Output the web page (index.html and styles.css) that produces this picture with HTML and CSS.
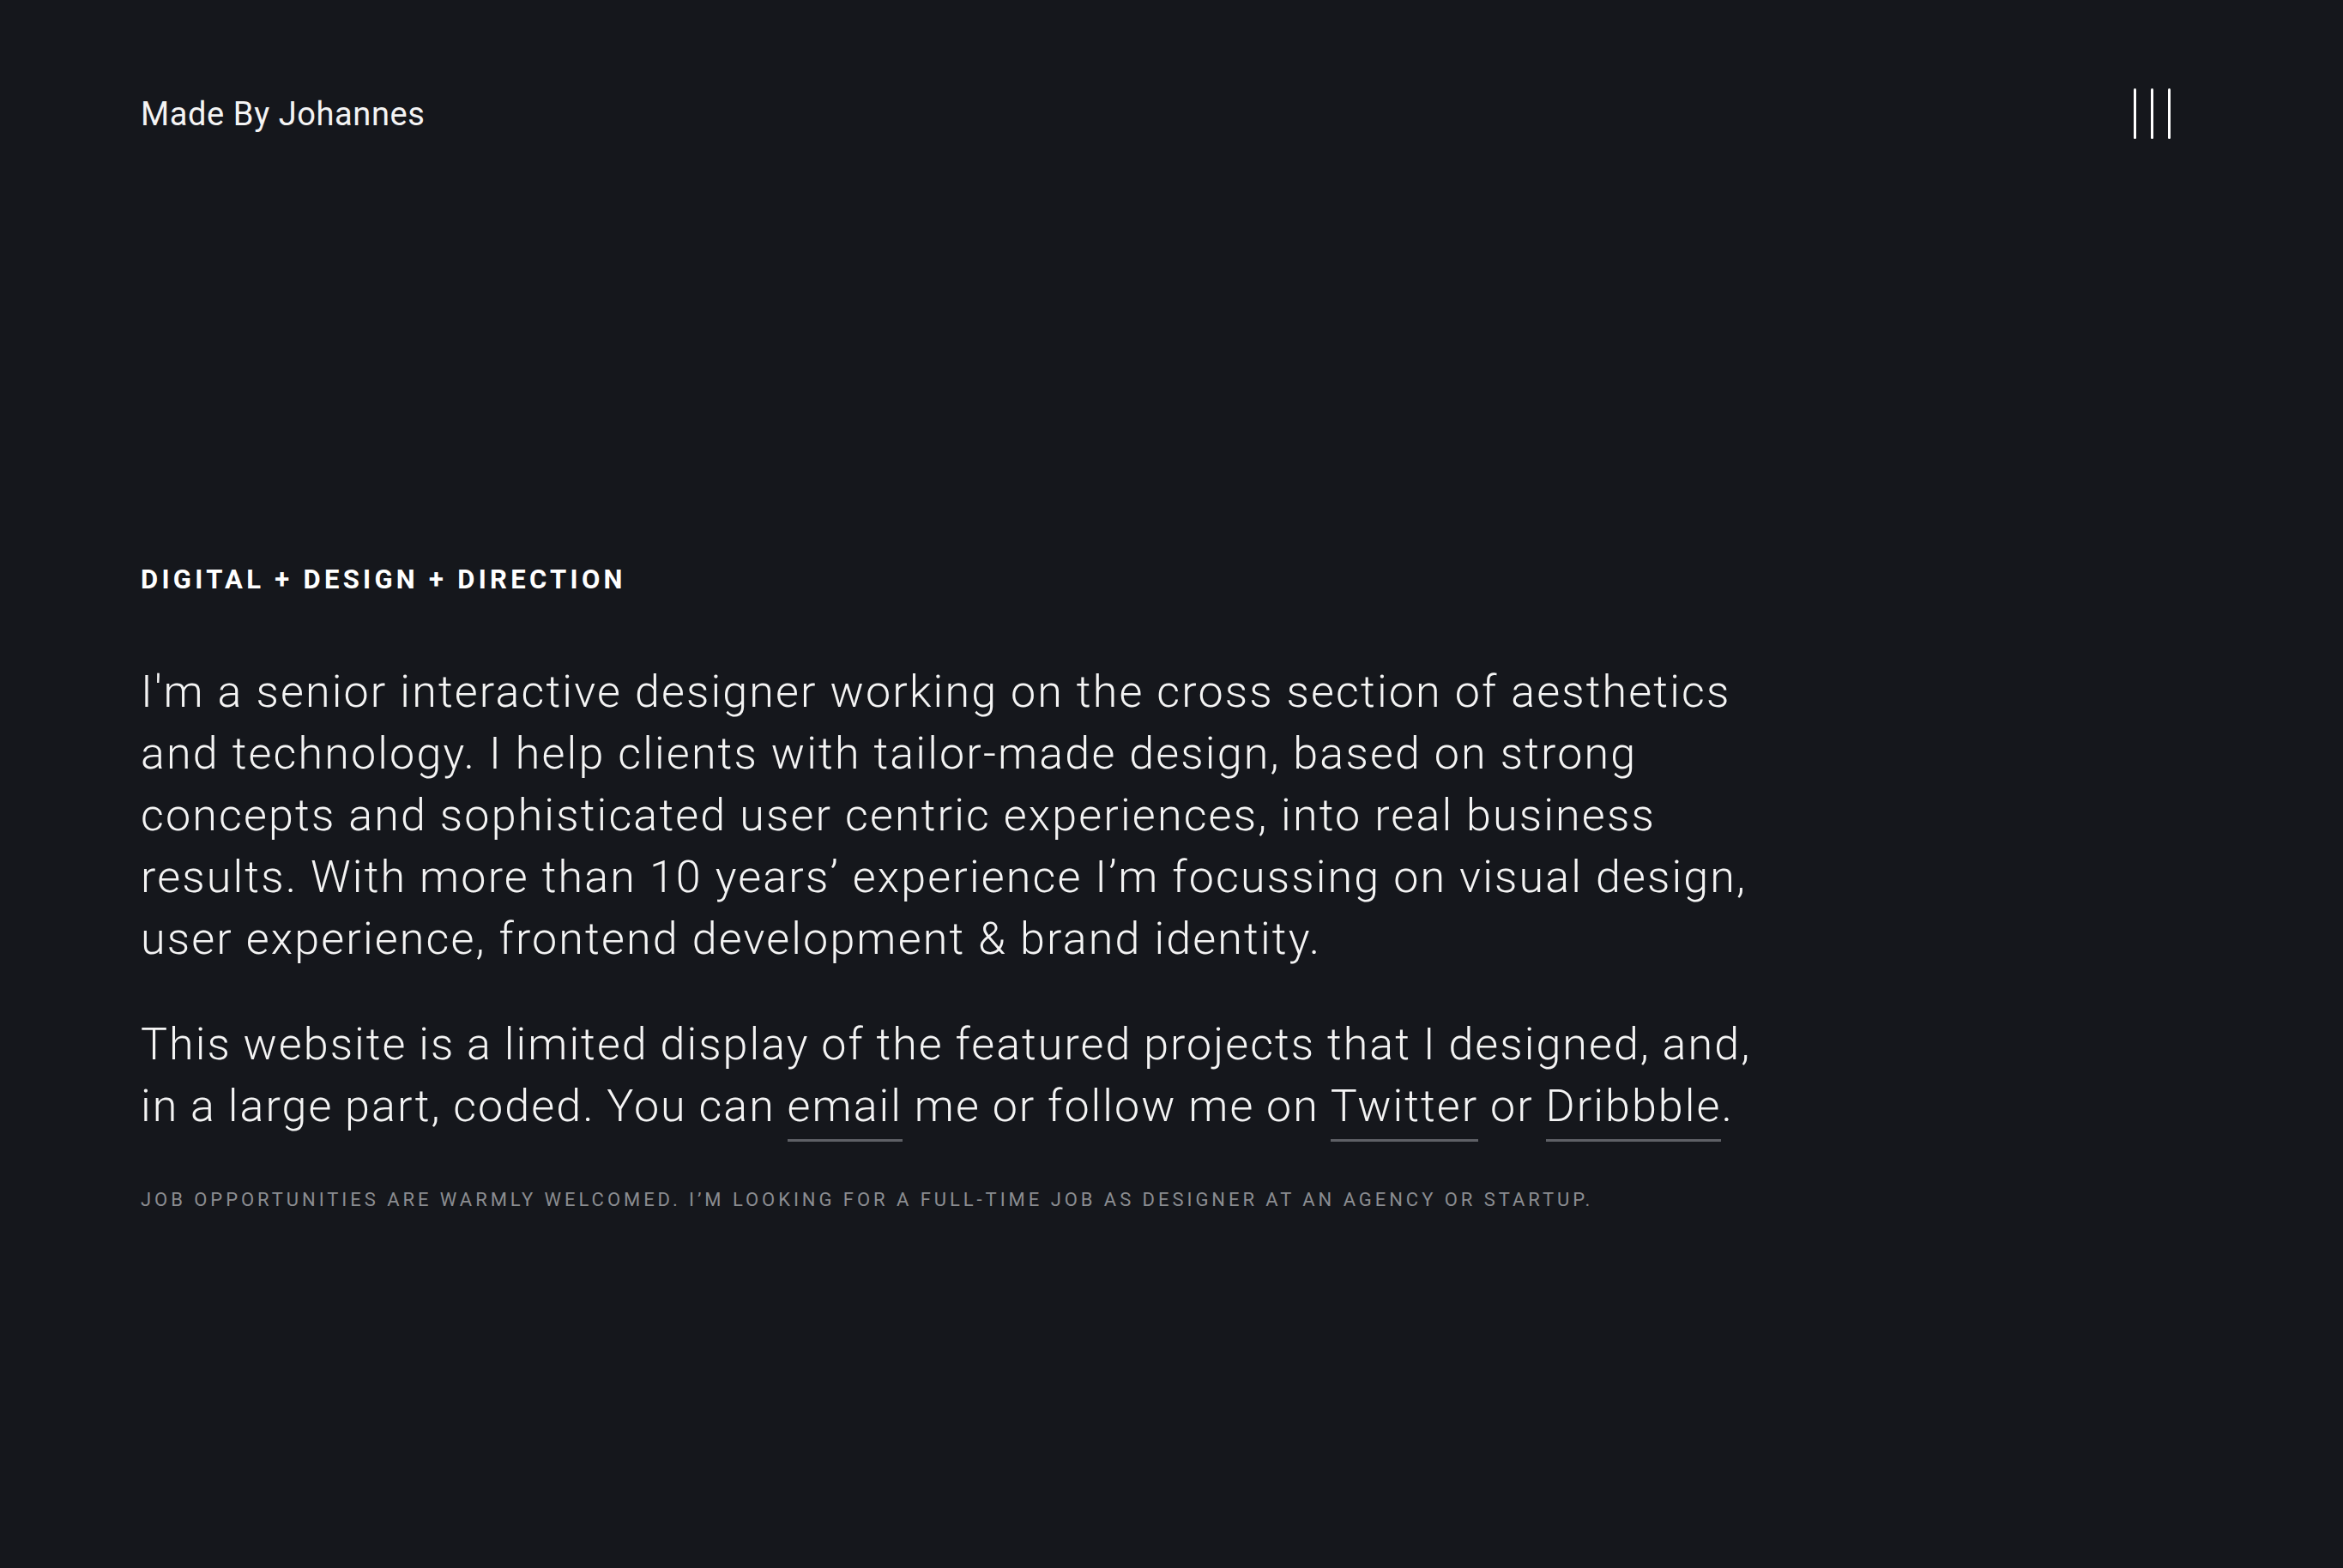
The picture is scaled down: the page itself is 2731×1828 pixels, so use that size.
FILE: index.html
```html
<!DOCTYPE html>
<html lang="en">
<head>
<meta charset="utf-8">
<title>Made By Johannes</title>
<link rel="stylesheet" href="styles.css">
</head>
<body>
<div class="page">
  <header class="header">
    <a class="brand" href="#">Made By Johannes</a>
    <button class="menu" aria-label="Menu"><span></span><span></span><span></span></button>
  </header>
  <main class="intro">
    <h1 class="kicker">DIGITAL + DESIGN + DIRECTION</h1>
    <p class="lead">I'm a senior interactive designer working on the cross section of aesthetics<br>and technology. I help clients with tailor-made design, based on strong<br>concepts and sophisticated user centric experiences, into real business<br>results. With more than 10 years’ experience I’m focussing on visual design,<br>user experience, frontend development &amp; brand identity.</p>
    <p class="lead second">This website is a limited display of the featured projects that I designed, and,<br>in a large part, coded. You can <a class="link" href="#">email</a> me or follow me on <a class="link" href="#">Twitter</a> or <a class="link" href="#">Dribbble</a>.</p>
    <p class="note">JOB OPPORTUNITIES ARE WARMLY WELCOMED. I’M LOOKING FOR A FULL-TIME JOB AS DESIGNER AT AN AGENCY OR STARTUP.</p>
  </main>
</div>
</body>
</html>
```
FILE: styles.css
```css
html, body {
  margin: 0;
  padding: 0;
  background: #15171c;
}
body {
  font-family: Roboto, "Liberation Sans", sans-serif;
  color: #f4f4f4;
  min-height: 1828px;
}
.page {
  padding: 103px 201px 0 164px;
}
.header {
  display: flex;
  justify-content: space-between;
  align-items: center;
  height: 59px;
}
.brand {
  font-size: 38px;
  line-height: 44px;
  letter-spacing: 0.6px;
  font-weight: 400;
  color: #f4f4f4;
  text-decoration: none;
}
.menu {
  display: flex;
  gap: 17px;
  height: 59px;
  padding: 0;
  margin: 0;
  border: 0;
  background: none;
}
.menu span {
  display: block;
  width: 3px;
  height: 59px;
  border-radius: 2px;
  background: #ffffff;
}
.intro {
  margin-top: 496px;
  max-width: 2040px;
}
.kicker {
  margin: 0;
  font-size: 31px;
  line-height: 36px;
  font-weight: 700;
  letter-spacing: 4.3px;
  color: #ffffff;
}
.lead {
  margin: 77px 0 0;
  font-size: 52px;
  line-height: 72px;
  font-weight: 300;
  letter-spacing: 2.15px;
  color: #f4f4f4;
}
.lead.second {
  margin-top: 51px;
  letter-spacing: 2.05px;
  word-spacing: -1px;
}
.link {
  color: inherit;
  text-decoration: none;
  padding-bottom: 8px;
  border-bottom: 3px solid #5e6066;
}
.note {
  margin: 58px 0 0;
  font-size: 22px;
  line-height: 30px;
  font-weight: 400;
  letter-spacing: 3.95px;
  color: #8b8d91;
}
```
